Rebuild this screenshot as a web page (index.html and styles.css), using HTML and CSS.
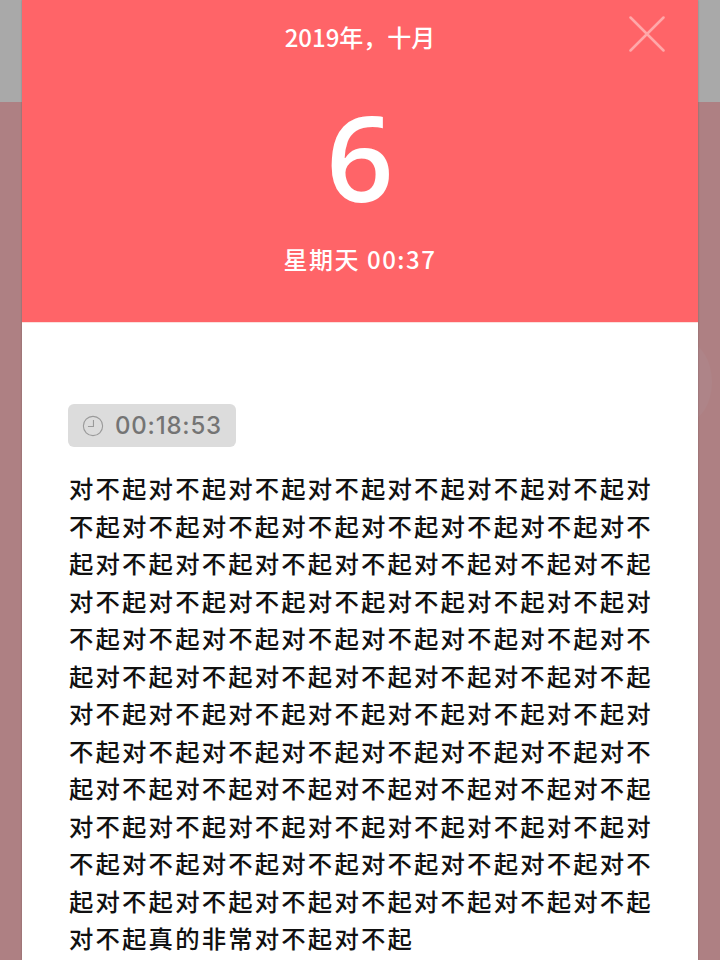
FILE: index.html
```html
<!DOCTYPE html>
<html lang="zh-CN">
<head>
<meta charset="utf-8">
<title>日记</title>
<link rel="stylesheet" href="styles.css">
</head>
<body>
<div class="backdrop">
  <div class="topbar"></div>
  <div class="dim"><div class="blob"></div></div>
</div>
<main class="modal">
  <header class="head">
    <div class="month">2019年，十月</div>
    <div class="day">6</div>
    <div class="week">星期天 00:37</div>
    <svg class="close" viewBox="0 0 36 36" aria-label="关闭"><path d="M1.500 1.500 34.500 34.500M34.500 1.500 1.500 34.500"/></svg>
  </header>
  <section class="body">
    <div class="timer">
      <svg class="clock" viewBox="0 0 24 24"><circle cx="12" cy="12" r="10.500"/><path d="M12.500 5.500V12.500H6.500"/></svg>
      <span>00:18:53</span>
    </div>
    <p class="text">对不起对不起对不起对不起对不起对不起对不起对不起对不起对不起对不起对不起对不起对不起对不起对不起对不起对不起对不起对不起对不起对不起对不起对不起对不起对不起对不起对不起对不起对不起对不起对不起对不起对不起对不起对不起对不起对不起对不起对不起对不起对不起对不起对不起对不起对不起对不起对不起对不起对不起对不起对不起对不起对不起对不起对不起对不起对不起对不起对不起对不起对不起对不起对不起对不起对不起对不起对不起对不起对不起对不起对不起对不起对不起对不起对不起对不起对不起对不起对不起对不起对不起对不起对不起对不起对不起对不起对不起对不起真的非常对不起对不起</p>
  </section>
</main>
</body>
</html>
```
FILE: styles.css
```css
* { box-sizing: border-box; }
html, body { margin: 0; height: 100%; overflow: hidden; }
body {
  font-family: "Noto Sans CJK SC", "Noto Sans", sans-serif;
  position: relative;
  width: 720px;
  height: 960px;
}
.backdrop { height: 960px; display: flex; flex-direction: column; }
.topbar { height: 102px; background: #a9a9a9; }
.dim { flex: 1; background: #ae8083; position: relative; overflow: hidden; }
.blob {
  position: absolute;
  left: 660px;
  top: 240px;
  width: 52px;
  height: 80px;
  border-radius: 50%;
  background: #ae8488;
}
.modal {
  position: absolute;
  left: 22px;
  top: 0;
  width: 676px;
  height: 960px;
  background: #fff;
  box-shadow: 0 0 2px rgba(0, 0, 0, .25);
}
.head {
  position: relative;
  height: 323px;
  background: #ff6468;
  color: #fff;
  display: flex;
  flex-direction: column;
  align-items: center;
  border-bottom: 1px solid #fbe0dd;
}
.month { margin-top: 19px; font-size: 24px; line-height: 36px; font-weight: 500; }
.day { margin-top: 32px; font-family: "Open Sans", sans-serif; font-size: 118px; font-weight: 600; line-height: 140px; }
.week { margin-top: 14px; font-size: 24px; line-height: 36px; letter-spacing: 1.5px; font-weight: 500; }
.close {
  position: absolute;
  right: 33px;
  top: 16px;
  width: 36px;
  height: 36px;
  fill: none;
  stroke: #ffa8a9;
  stroke-width: 2.5;
  stroke-linecap: round;
}
.body { padding: 81px 44px 0 46px; }
.timer {
  width: 168px;
  height: 43px;
  display: flex;
  align-items: center;
  gap: 11px;
  padding-left: 14px;
  background: #dcdcdc;
  border-radius: 6px;
  color: #747474;
  font-family: Inter, sans-serif;
  font-size: 24px;
  font-weight: 500;
  letter-spacing: .8px;
}
.clock { width: 22px; height: 22px; fill: none; stroke: #9a9a9a; stroke-width: 1.2; flex: none; }
.text {
  margin: 22px 0 0;
  padding-left: 1px;
  font-size: 24.4px;
  line-height: 37.5px;
  letter-spacing: 2.15px;
  color: #111;
  font-weight: 500;
}
```
